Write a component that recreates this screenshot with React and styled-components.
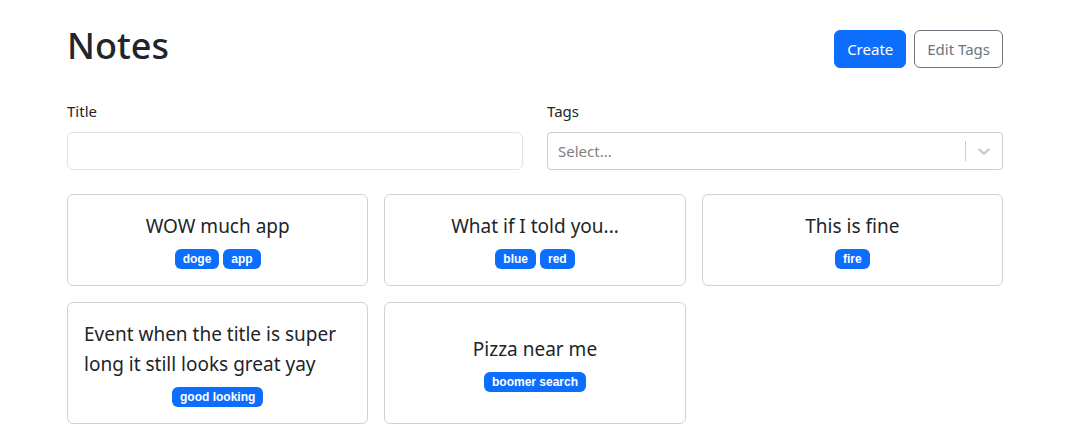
import styled, { createGlobalStyle } from "styled-components";

const GlobalStyle = createGlobalStyle`
  * { box-sizing: border-box; }
  body {
    margin: 0;
    background: #fff;
    color: #212529;
    font-family: "Noto Sans", "Open Sans", sans-serif;
    font-size: 16px;
    line-height: 1.5;
  }
`;

const Container = styled.div`
  max-width: 960px;
  margin: 22px auto;
  padding: 0 13px 0 11px;
`;

const Header = styled.div`
  display: flex;
  align-items: center;
  justify-content: space-between;
  margin-bottom: 24px;
`;

const Title = styled.h1`
  font-size: 36px;
  font-weight: 500;
  line-height: 1.2;
  margin: 2px 0 8px;
`;

const Actions = styled.div`
  display: flex;
  gap: 8px;
`;

const Button = styled.button`
  font-family: inherit;
  font-size: 15px;
  line-height: 24px;
  padding: 6px 12px;
  border-radius: 6px;
  cursor: pointer;
  border: 1px solid ${(p) => (p.$outline ? "#6c757d" : "#0d6efd")};
  background: ${(p) => (p.$outline ? "transparent" : "#0d6efd")};
  color: ${(p) => (p.$outline ? "#6c757d" : "#fff")};
`;

const Form = styled.div`
  display: grid;
  grid-template-columns: 1fr 1fr;
  gap: 24px;
  margin-bottom: 24px;
`;

const Field = styled.div`
  display: flex;
  flex-direction: column;
`;

const Label = styled.label`
  margin-bottom: 9px;
  font-size: 15px;
  line-height: 24px;
`;

const Input = styled.input`
  height: 38px;
  border: 1px solid #dee2e6;
  border-radius: 6px;
  padding: 6px 12px;
  font-family: inherit;
  font-size: 16px;
`;

const SelectBox = styled.div`
  height: 38px;
  border: 1px solid #ccc;
  border-radius: 4px;
  display: flex;
  align-items: center;
`;

const Placeholder = styled.div`
  flex: 1;
  padding: 2px 10px;
  color: #808080;
  font-size: 15px;
`;

const Separator = styled.span`
  width: 1px;
  align-self: stretch;
  margin: 8px 0;
  background: #ccc;
`;

const Indicator = styled.div`
  display: flex;
  padding: 8px;
  color: #ccc;
`;

const Grid = styled.div`
  display: grid;
  grid-template-columns: repeat(3, 1fr);
  gap: 16px;
`;

const Card = styled.div`
  border: 1px solid rgba(0, 0, 0, 0.175);
  border-radius: 6px;
  padding: 16px;
  display: flex;
  flex-direction: column;
  align-items: center;
  justify-content: center;
  gap: 8px;
`;

const CardTitle = styled.span`
  font-size: 19px;
  line-height: 30px;
  align-self: stretch;
  text-align: ${(p) => (p.$long ? "left" : "center")};
`;

const Badges = styled.div`
  display: flex;
  gap: 4px;
  justify-content: center;
`;

const Badge = styled.span`
  background: #0d6efd;
  color: #fff;
  font-family: "Liberation Sans", Arial, sans-serif;
  font-weight: 700;
  font-size: 12px;
  line-height: 1;
  padding: 4px 8px;
  border-radius: 6px;
`;

const notes = [
  { title: "WOW much app", tags: ["doge", "app"] },
  { title: "What if I told you...", tags: ["blue", "red"] },
  { title: "This is fine", tags: ["fire"] },
  {
    title: "Event when the title is super long it still looks great yay",
    tags: ["good looking"],
    long: true,
  },
  { title: "Pizza near me", tags: ["boomer search"] },
];

const Chevron = () => (
  <svg width="20" height="20" viewBox="0 0 20 20" fill="currentColor">
    <path d="M4.516 7.548c0.436-0.446 1.043-0.481 1.576 0l3.908 3.747 3.908-3.747c0.533-0.481 1.141-0.446 1.574 0 0.436 0.445 0.408 1.197 0 1.615-0.406 0.418-4.695 4.502-4.695 4.502-0.217 0.223-0.502 0.335-0.787 0.335s-0.57-0.112-0.789-0.335c0 0-4.287-4.084-4.695-4.502s-0.436-1.17 0-1.615z" />
  </svg>
);

export default function App() {
  return (
    <>
      <GlobalStyle />
      <Container>
        <Header>
          <Title>Notes</Title>
          <Actions>
            <Button>Create</Button>
            <Button $outline>Edit Tags</Button>
          </Actions>
        </Header>
        <Form>
          <Field>
            <Label>Title</Label>
            <Input type="text" />
          </Field>
          <Field>
            <Label>Tags</Label>
            <SelectBox>
              <Placeholder>Select...</Placeholder>
              <Separator />
              <Indicator>
                <Chevron />
              </Indicator>
            </SelectBox>
          </Field>
        </Form>
        <Grid>
          {notes.map((n) => (
            <Card key={n.title}>
              <CardTitle $long={n.long}>{n.title}</CardTitle>
              <Badges>
                {n.tags.map((t) => (
                  <Badge key={t}>{t}</Badge>
                ))}
              </Badges>
            </Card>
          ))}
        </Grid>
      </Container>
    </>
  );
}
